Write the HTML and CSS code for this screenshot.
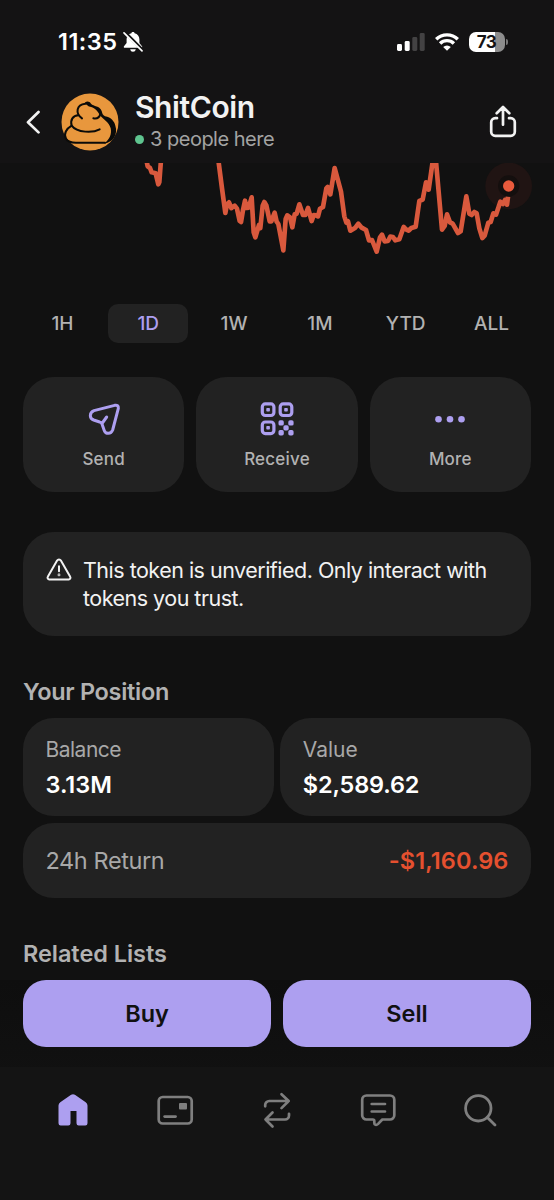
FILE: index.html
```html
<!DOCTYPE html>
<html lang="en">
<head>
<meta charset="utf-8">
<title>ShitCoin</title>
<link rel="stylesheet" href="styles.css">
</head>
<body>
<div class="screen">
  <header class="header">
    <div class="status">
      <span class="time">11:35</span>
      <svg class="bell" width="20" height="22" viewBox="0 0 20 22">
        <path d="M10 1c-.9 0-1.500.5-1.600 1.300C5.400 3 3.600 5.400 3.600 8.300v3.600L1 15.200c-.5.800-.2 1.600.7 1.600h16.600c.9 0 1.200-.8.700-1.600L16.400 11.900V8.300c0-2.900-1.800-5.300-4.800-6C11.500 1.500 10.900 1 10 1zM7.200 18.200h5.600c-.3 1.700-1.300 2.500-2.800 2.500s-2.500-.8-2.800-2.500z" fill="#fff"/>
        <path d="M1.700 1.200 20 19.400" stroke="#141314" stroke-width="3.200"/>
        <path d="M1 1.800 19 19.800" stroke="#fff" stroke-width="1.700" stroke-linecap="round"/>
      </svg>
      <div class="indicators">
        <svg width="28" height="18" viewBox="0 0 28 18">
          <rect x="0" y="11" width="5" height="7" rx="1.400" fill="#fff"/>
          <rect x="7.700" y="8" width="5" height="10" rx="1.400" fill="#fff"/>
          <rect x="15.300" y="4" width="5" height="14" rx="1.400" fill="#434243"/>
          <rect x="22.700" y="0" width="5" height="18" rx="1.400" fill="#434243"/>
        </svg>
        <svg width="24" height="18" viewBox="0 0 24 18">
          <g fill="none" stroke="#fff" stroke-width="3.400">
            <path d="M1.200 6.300a15.400 15.400 0 0 1 21.600 0"/>
            <path d="M5.100 10.500a9.800 9.800 0 0 1 13.800 0"/>
          </g>
          <path d="M8.200 13.900a5.500 5.500 0 0 1 7.600 0L12 17.800z" fill="#fff"/>
        </svg>
        <div class="battery"><span class="level">73</span></div>
      </div>
    </div>
    <div class="title-row">
      <svg class="back" width="16" height="24" viewBox="0 0 16 24"><path d="M13.500 2 3 12.200 13.500 22.400" fill="none" stroke="#f2f2f2" stroke-width="2.700" stroke-linecap="round" stroke-linejoin="round"/></svg>
      <svg class="avatar" width="58" height="58" viewBox="0 0 174 174">
        <circle cx="87" cy="87" r="85.500" fill="#e8973d"/>
        <g fill="none" stroke="#0b0b09" stroke-width="6" stroke-linecap="round" stroke-linejoin="round">
          <path d="M63 76C42 61 46 35 73 32"/>
          <path d="M52 67C36 67 27 81 32 98C48 120 96 120 116 109"/>
          <path d="M32 98C16 107 7 123 15 137C21 147 31 149 45 149H132"/>
          <path d="M97 76C106 78 115 74 118 63"/>
        </g>
        <path d="M71 33C72 23 86 24 90 32C98 41 116 37 122 54C124 62 125 66 132 70C151 73 160 86 163 98C171 122 158 147 130 152C145 140 153 124 149 106C145 88 126 78 116 66C111 53 96 41 87 41C80 40 78 34 71 33Z" fill="#0b0b09"/>
      </svg>
      <div class="titles">
        <h1 class="name">ShitCoin</h1>
        <div class="presence"><i class="dot"></i><span>3 people here</span></div>
      </div>
      <svg class="share" width="28" height="34" viewBox="0 0 28 34" fill="none" stroke="#f2f2f2" stroke-width="2.700" stroke-linecap="round" stroke-linejoin="round">
        <path d="M8 13.200H6.200a4 4 0 0 0-4 4v9.600a4 4 0 0 0 4 4h15.600a4 4 0 0 0 4-4v-9.600a4 4 0 0 0-4-4H20M14 19.700V2.500M7.700 8.200 14 2l6.300 6.200"/>
      </svg>
    </div>
  </header>

  <main class="content">
    <svg class="chart" width="554" height="128" viewBox="-390 39 1662 384">
      <circle cx="1136" cy="108" r="70" fill="#201413"/>
      <circle cx="1136" cy="108" r="32" fill="#140f0e"/>
      <g fill="none" stroke="#d9593d" stroke-width="14" stroke-linejoin="round" stroke-linecap="butt">
        <path d="M48 25 53 49 60 54 65 67 77 70 85 103 88 96 93 30"/>
        <path d="M265 30 276 115 286 189 291 163 297 157 304 174 314 167 321 176 329 213 333 216 339 180 345 152 350 174 356 173 365 142 371 247 376 262 387 225 391 234 398 167 403 156 409 166 419 214 424 214 434 188 440 215 445 222 460 301 467 207 472 196 480 202 487 232 494 193 500 191 508 163 519 195 526 195 534 174 545 213 551 195 558 196 564 199 570 176 579 171 589 115 593 111 601 133 614 54 633 125 643 199 649 218 654 214 661 242 676 233 685 221 695 233 708 240 717 271 726 270 740 305 750 262 756 254 764 274 774 273 781 260 789 261 796 271 808 268 821 231 828 238 836 242 844 234 857 230 868 153 878 149 888 97 896 119 908 35 918 35 936 239 944 228 951 193 960 217 968 221 984 249 992 244 1009 139 1018 191 1025 195 1033 186 1040 190 1048 235 1057 264 1064 257 1075 218 1082 216 1090 190 1098 194 1111 155 1119 162 1125 150 1131 164 1134 140"/>
      </g>
      <circle cx="1136" cy="108" r="17" fill="#e95a3c"/>
    </svg>

    <nav class="ranges">
      <span class="range">1H</span>
      <span class="range active">1D</span>
      <span class="range">1W</span>
      <span class="range">1M</span>
      <span class="range">YTD</span>
      <span class="range">ALL</span>
    </nav>

    <section class="actions">
      <div class="action">
        <svg width="36" height="36" viewBox="0 0 108 108" fill="none" stroke="#ad9ff0" stroke-width="9" stroke-linecap="round" stroke-linejoin="round"><path d="M24 29 86 13Q98 11 97 22L80 87Q76 97 67 97Q58 97 55 89L48 69Q46 64 41 63L23 57Q13 53 13 44Q13 33 24 29ZM49 66 62 48"/></svg>
        <span>Send</span>
      </div>
      <div class="action">
        <svg width="36" height="36" viewBox="0 0 36 36">
          <g fill="none" stroke="#ad9ff0" stroke-width="3.200"><rect x="3.300" y="2.900" width="11.600" height="11.600" rx="3"/><rect x="21.200" y="2.900" width="11.600" height="11.600" rx="3"/><rect x="3.300" y="21" width="11.600" height="11.600" rx="3"/></g>
          <g fill="#ad9ff0"><rect x="7.300" y="7" width="3.600" height="3.600" rx=".8"/><rect x="25.200" y="7" width="3.600" height="3.600" rx=".8"/><rect x="7.300" y="25" width="3.600" height="3.600" rx=".8"/>
          <rect x="19.500" y="19.300" width="5.300" height="5.300" rx="1.700"/><rect x="29.300" y="19.300" width="5.300" height="5.300" rx="1.700"/><rect x="24.400" y="24.200" width="5.300" height="5.300" rx="1.700"/><rect x="19.500" y="29.100" width="5.300" height="5.300" rx="1.700"/><rect x="29.300" y="29.100" width="5.300" height="5.300" rx="1.700"/></g>
        </svg>
        <span>Receive</span>
      </div>
      <div class="action">
        <svg width="36" height="36" viewBox="0 0 36 36" fill="#ad9ff0"><circle cx="6.500" cy="18.200" r="3.300"/><circle cx="18" cy="18.200" r="3.300"/><circle cx="29.500" cy="18.200" r="3.300"/></svg>
        <span>More</span>
      </div>
    </section>

    <section class="alert">
      <svg width="26" height="24" viewBox="0 0 26 24" fill="none" stroke="#f2f2f2" stroke-width="2" stroke-linecap="round" stroke-linejoin="round"><path d="M11.100 2.500a2.200 2.200 0 0 1 3.800 0L24.200 18.800a1.700 1.700 0 0 1-1.500 2.600H3.300a1.700 1.700 0 0 1-1.500-2.600zM13 8.200v5"/><circle cx="13" cy="16.900" r=".4"/></svg>
      <p>This token is unverified. Only interact with<br>tokens you trust.</p>
    </section>

    <h2 class="heading position-heading">Your Position</h2>
    <section class="position">
      <div class="card"><span class="label tight">Balance</span><strong class="amount">3.13M</strong></div>
      <div class="card"><span class="label">Value</span><strong class="amount value">$2,589.62</strong></div>
      <div class="card return"><span class="return-label">24h Return</span><strong class="loss">-$1,160.96</strong></div>
    </section>

    <h2 class="heading related-heading">Related Lists</h2>
    <div class="trade">
      <button class="trade-button">Buy</button>
      <button class="trade-button">Sell</button>
    </div>
  </main>

  <footer class="tabbar">
    <svg width="40" height="40" viewBox="0 0 40 40"><path d="M18.100 4.800a3.300 3.300 0 0 1 3.800 0L32.700 12.300a4 4 0 0 1 1.800 3.300v17.600a2.200 2.200 0 0 1-2.200 2.200h-6.600a2.200 2.200 0 0 1-2.200-2.200V21h-6v12.200a2.200 2.200 0 0 1-2.200 2.200H7.700a2.200 2.200 0 0 1-2.200-2.200V15.600a4 4 0 0 1 1.800-3.300z" fill="#ad9ff0"/></svg>
    <svg width="40" height="40" viewBox="0 0 40 40"><rect x="3.700" y="7" width="33" height="26.500" rx="4" fill="none" stroke="#7f7f7f" stroke-width="2.700"/><rect x="24" y="13" width="8" height="6.500" rx="1" fill="#7f7f7f"/><path d="M9.700 26.600H20.500" stroke="#7f7f7f" stroke-width="2.900" stroke-linecap="round"/></svg>
    <svg width="40" height="40" viewBox="0 0 40 40" fill="none" stroke="#7f7f7f" stroke-width="2.700" stroke-linecap="round" stroke-linejoin="round"><path d="M8.200 16.300V15a4 4 0 0 1 4-4h19.500M24.500 4.200 31.700 11l-7.200 7.100M32 23.800V25.500a4 4 0 0 1-4 4H8.500M15.500 22.500 8.500 29.500l7 7"/></svg>
    <svg width="40" height="40" viewBox="0 0 40 40" fill="none" stroke="#7f7f7f" stroke-width="2.700" stroke-linecap="round" stroke-linejoin="round"><path d="M8.500 5.500H32a4.300 4.300 0 0 1 4.300 4.300v15.400a4.300 4.300 0 0 1-4.300 4.300h-7.700l-4.200 4.400c-1.800 1.800-3.800 1-3.800-1V31q0-1.500-1.500-1.500H8.500a4.300 4.300 0 0 1-4.300-4.300V9.800A4.300 4.300 0 0 1 8.500 5.500zM13.700 14H27M13.700 21.500H27"/></svg>
    <svg width="40" height="40" viewBox="0 0 40 40" fill="none" stroke="#7f7f7f" stroke-width="2.800" stroke-linecap="round"><circle cx="18.300" cy="18.300" r="12.700"/><path d="M27.400 27.400 35 35"/></svg>
  </footer>
</div>
</body>
</html>
```
FILE: styles.css
```css
* { box-sizing: border-box; }
body { margin: 0; background: #111; }
.screen {
  width: 554px;
  height: 1200px;
  display: flex;
  flex-direction: column;
  overflow: hidden;
  background: #111;
  color: #f2f2f2;
  font-family: Inter, "Liberation Sans", sans-serif;
}
h1, h2, p { margin: 0; }
svg { display: block; flex: none; }

.header { height: 163px; background: #141314; }
.status { display: flex; align-items: center; height: 83px; padding: 0 46px 0 58px; }
.time { width: 65px; font-size: 23.500px; font-weight: 600; letter-spacing: 0.5px; color: #fff; white-space: nowrap; }
.bell { margin-top: 1px; }
.indicators { display: flex; align-items: center; gap: 10px; margin-left: auto; }
.battery {
  position: relative;
  width: 36px;
  height: 20px;
  border-radius: 7px;
  background: linear-gradient(90deg, #fff 73%, #8d8d8d 73%);
  margin-right: 3px;
}
.battery::after {
  content: "";
  position: absolute;
  right: -3px;
  top: 7px;
  width: 2px;
  height: 6px;
  border-radius: 0 2px 2px 0;
  background: #777;
}
.level { display: block; text-align: center; line-height: 20px; font-size: 17px; font-weight: 700; letter-spacing: -0.5px; color: #141314; padding-right: 1px; }

.title-row { display: flex; align-items: center; height: 80px; padding: 0 37px 2px 25px; }
.back { margin-right: 20px; }
.titles { margin-left: 16px; flex: 1; }
.name { font-size: 30px; line-height: 34px; font-weight: 600; letter-spacing: -0.4px; }
.presence { display: flex; align-items: center; gap: 6px; font-size: 20px; line-height: 30px; letter-spacing: -0.5px; color: #a3a3a3; white-space: nowrap; }
.dot { width: 9px; height: 9px; border-radius: 50%; background: #5fc48f; }

.content { height: 904px; flex: none; }
.ranges { display: grid; grid-template-columns: repeat(6, 80px); gap: 5.800px; margin: 13px 0 0 22.500px; }
.range { height: 39px; border-radius: 10px; line-height: 39px; text-align: center; font-size: 19px; font-weight: 500; color: #b2b2b2; }
.range.active { background: #222; color: #ad9ff0; }

.actions { display: grid; grid-template-columns: repeat(3, 1fr); gap: 12px; margin: 34px 23px 0; }
.action { height: 115px; border-radius: 31px; background: #222; display: flex; flex-direction: column; align-items: center; padding-top: 24px; font-size: 17px; font-weight: 500; line-height: 22px; letter-spacing: 0.2px; color: #b2b2b2; gap: 11px; }

.alert { display: flex; gap: 11px; height: 104px; margin: 40px 23px 0; padding: 24px 23px; border-radius: 31px; background: #222; font-size: 21.500px; line-height: 28px; letter-spacing: -0.51px; white-space: nowrap; }
.alert svg { margin-top: 2px; }

.heading { font-size: 23.500px; line-height: 30px; font-weight: 600; color: #b2b2b2; margin-left: 23px; letter-spacing: -0.3px; }
.position-heading { margin-top: 41px; }
.position { display: grid; grid-template-columns: 1fr 1fr; gap: 6.500px; margin: 11px 23px 0; }
.card { height: 98px; border-radius: 31px; background: #222; display: flex; flex-direction: column; gap: 5px; padding: 18px 22.500px; }
.label { font-size: 21px; line-height: 28px; color: #a8a8a8; }
.tight { letter-spacing: -0.5px; }
.amount { font-size: 23.500px; line-height: 32px; font-weight: 600; color: #fff; }
.value { letter-spacing: -0.15px; }
.return { grid-column: 1 / -1; height: 75px; flex-direction: row; justify-content: space-between; align-items: center; padding: 0 22.500px; font-size: 23.500px; color: #a8a8a8; }
.return-label { letter-spacing: -0.4px; }
.loss { font-weight: 600; letter-spacing: 0.1px; color: #e5502f; }

.related-heading { margin-top: 41px; letter-spacing: -0.05px; }
.trade { display: grid; grid-template-columns: 1fr 1fr; gap: 12px; height: 99px; margin-top: 11px; padding: 0.500px 23px 19px; background: linear-gradient(#0e0e0e, #111); }
.trade-button { height: 67px; border: 0; border-radius: 23px; padding: 0; background: #ad9ff0; color: #111; font-family: inherit; font-size: 23.500px; font-weight: 600; }

.tabbar { flex: 1; display: flex; justify-content: space-between; background: #141414; padding: 23px 54px 0 53px; }
```
